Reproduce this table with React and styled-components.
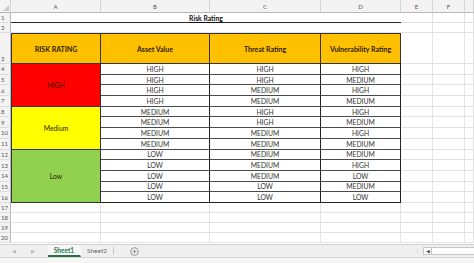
import React from "react"
import styled, { createGlobalStyle, css } from "styled-components"

const GlobalStyle = createGlobalStyle`
  html, body { margin: 0; padding: 0; background: #fff; overflow: hidden; }
  * { box-sizing: border-box; }
`

const FONT = `"Lato", "Liberation Sans", sans-serif`

const Window = styled.div`
  width: 474px;
  height: 263px;
  display: flex;
  flex-direction: column;
  font-family: ${FONT};
  color: #222;
  overflow: hidden;
`

const Sheet = styled.div`
  display: grid;
  grid-template-columns: 11px 90px 109px 111px 80px 32px 32px 1fr;
  grid-template-rows: 13px 10px 10px 31px repeat(13, 10.7px) repeat(4, 10px);
  flex: 1;
  overflow: hidden;
`

const Cell = styled.div`
  display: flex;
  align-items: center;
  justify-content: center;
  font-size: 6.8px;
  white-space: nowrap;
  border-right: 1px solid #e2e2e2;
  border-bottom: 1px solid #e2e2e2;
  grid-column: span ${p => p.$colSpan || 1};
  grid-row: span ${p => p.$rowSpan || 1};
`

const ColHead = styled(Cell)`
  background: #f3f3f3;
  color: #555;
  font-size: 6px;
  border-right: 1px solid #d4d4d4;
  border-bottom: 1px solid #b8b8b8;
`

const Corner = styled(ColHead)`
  position: relative;
  &::after {
    content: "";
    position: absolute;
    right: 1px;
    bottom: 1px;
    border-left: 6px solid transparent;
    border-bottom: 6px solid #c8c8c8;
  }
`

const RowHead = styled(Cell)`
  background: #f3f3f3;
  color: #555;
  font-size: 6px;
  justify-content: flex-start;
  padding-left: 1px;
  border-right: 1px solid #b8b8b8;
  border-bottom: 1px solid #dcdcdc;
  ${p => p.$tall && css`align-items: flex-end; padding-bottom: 1px;`}
`

const Title = styled(Cell)`
  font-weight: 700;
  color: #111;
  text-decoration: underline;
  border-right: none;
  border-bottom: 1.5px solid #2a2a2a;
  padding-top: 1px;
`

const Header = styled(Cell)`
  background: #ffc000;
  font-weight: 700;
  font-size: 7px;
  color: #2b2100;
  border-top: 1px solid #333;
  border-right: 1px solid #333;
  border-bottom: 1px solid #333;
  ${p => p.$first && css`border-left: 1px solid #333;`}
`

const Rating = styled(Cell)`
  background: ${p => p.$bg};
  color: #2a1a00;
  border-left: 1px solid #333;
  border-right: 1px solid #333;
  border-bottom: 1px solid #333;
`

const Data = styled(Cell)`
  background: #fff;
  color: #333;
  border-right: 1px solid #222;
  border-bottom: 1.5px solid #4a4a4a;
  ${p => p.$last && css`border-bottom: 1.5px solid #222;`}
`

const Blank = styled(Cell)`
  ${p => p.$plain && css`border-right-color: transparent;`}
`

const TabBar = styled.div`
  height: 14px;
  flex: none;
  display: flex;
  align-items: stretch;
  background: #efefef;
  border-top: 1px solid #cfcfcf;
  border-bottom: 1px solid #d6d6d6;
  font-size: 6.5px;
`

const Nav = styled.div`
  width: 48px;
  display: flex;
  align-items: center;
  justify-content: space-around;
  padding: 0 6px 0 4px;
  color: #b5b5b5;
  font-size: 5px;
`

const Tab = styled.div`
  width: 33px;
  display: flex;
  align-items: center;
  justify-content: center;
  color: ${p => (p.$active ? "#217346" : "#666")};
  font-weight: ${p => (p.$active ? 700 : 400)};
  background: ${p => (p.$active ? "#f7f7f7" : "transparent")};
  border-bottom: 2px solid ${p => (p.$active ? "#217346" : "transparent")};
  border-right: 1px solid ${p => (p.$active ? "transparent" : "#c4c4c4")};
  margin: ${p => (p.$active ? "0" : "2px 0")};
`

const AddSheet = styled.div`
  width: 40px;
  display: flex;
  align-items: center;
  justify-content: center;
`

const Spacer = styled.div`
  flex: 1;
`

const Grip = styled.div`
  width: 12px;
  display: flex;
  align-items: center;
  justify-content: center;
  color: #bdbdbd;
  font-size: 5px;
`

const Scroll = styled.div`
  width: 51px;
  margin: 2px 0;
  display: flex;
  align-items: stretch;
  background: #fff;
  border: 1px solid #c6c6c6;
  border-right: none;
`

const ScrollArrow = styled.div`
  width: 8px;
  display: flex;
  align-items: center;
  justify-content: center;
  font-size: 5px;
  color: #555;
  border-right: 1px solid #c6c6c6;
`

const Status = styled.div`
  height: 5px;
  flex: none;
  background: #f6f6f6;
`

const rows = [
  ["HIGH", "HIGH", "HIGH"],
  ["HIGH", "HIGH", "MEDIUM"],
  ["HIGH", "MEDIUM", "HIGH"],
  ["HIGH", "MEDIUM", "MEDIUM"],
  ["MEDIUM", "HIGH", "HIGH"],
  ["MEDIUM", "HIGH", "MEDIUM"],
  ["MEDIUM", "MEDIUM", "HIGH"],
  ["MEDIUM", "MEDIUM", "MEDIUM"],
  ["LOW", "MEDIUM", "MEDIUM"],
  ["LOW", "MEDIUM", "HIGH"],
  ["LOW", "MEDIUM", "LOW"],
  ["LOW", "LOW", "MEDIUM"],
  ["LOW", "LOW", "LOW"],
]

const groups = {
  0: { label: "HIGH", bg: "#ff0000", span: 4 },
  4: { label: "Medium", bg: "#ffff00", span: 4 },
  8: { label: "Low", bg: "#92d050", span: 5 },
}

const Trailing = () => (
  <>
    <Blank />
    <Blank />
    <Blank />
  </>
)

export default function App() {
  return (
    <Window>
      <GlobalStyle />
      <Sheet>
        <Corner />
        {["A", "B", "C", "D", "E", "F", ""].map((c, i) => (
          <ColHead key={i}>{c}</ColHead>
        ))}

        <RowHead>1</RowHead>
        <Title $colSpan={4}>Risk Rating</Title>
        <Trailing />

        <RowHead>2</RowHead>
        <Blank $plain />
        <Blank $plain />
        <Blank $plain />
        <Blank $plain />
        <Trailing />

        <RowHead $tall>3</RowHead>
        <Header $first>RISK RATING</Header>
        <Header>Asset Value</Header>
        <Header>Threat Rating</Header>
        <Header>Vulnerability Rating</Header>
        <Trailing />

        {rows.map((r, i) => (
          <React.Fragment key={i}>
            <RowHead>{i + 4}</RowHead>
            {groups[i] && (
              <Rating $rowSpan={groups[i].span} $bg={groups[i].bg}>
                {groups[i].label}
              </Rating>
            )}
            {r.map((v, j) => (
              <Data key={j} $last={i === rows.length - 1}>
                {v}
              </Data>
            ))}
            <Trailing />
          </React.Fragment>
        ))}

        {[17, 18, 19, 20].map(n => (
          <React.Fragment key={n}>
            <RowHead>{n}</RowHead>
            <Blank />
            <Blank />
            <Blank />
            <Blank />
            <Trailing />
          </React.Fragment>
        ))}
      </Sheet>

      <TabBar>
        <Nav>
          <span>◀</span>
          <span>▶</span>
        </Nav>
        <Tab $active>Sheet1</Tab>
        <Tab>Sheet2</Tab>
        <AddSheet>
          <svg width="9" height="9" viewBox="0 0 10 10">
            <circle cx="5" cy="5" r="4.3" fill="none" stroke="#777" strokeWidth="0.8" />
            <path d="M5 2.8v4.4M2.8 5h4.4" stroke="#777" strokeWidth="0.8" />
          </svg>
        </AddSheet>
        <Spacer />
        <Grip>⋮</Grip>
        <Scroll>
          <ScrollArrow>◀</ScrollArrow>
        </Scroll>
      </TabBar>
      <Status />
    </Window>
  )
}
